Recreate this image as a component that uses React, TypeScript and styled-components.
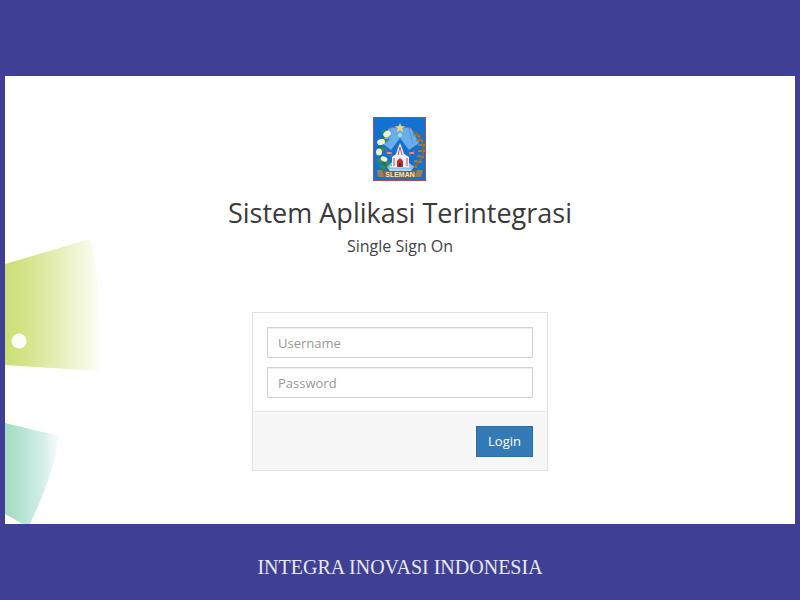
import React from "react";
import styled, { createGlobalStyle } from "styled-components";

const GlobalStyle = createGlobalStyle`
  *, *::before, *::after { box-sizing: border-box; }
  body {
    margin: 0;
    background: #3f4095;
    font-family: "Open Sans", "Noto Sans", sans-serif;
    color: #3a3a3a;
  }
`;

const Page = styled.div`
  min-height: 100vh;
  display: flex;
  flex-direction: column;
  padding: 76px 5px 0;
`;

const Screen = styled.main`
  display: grid;
  grid-template-columns: minmax(0, 1fr);
  background: #fff;
`;

const Backdrop = styled.svg`
  grid-area: 1 / 1;
  align-self: end;
  width: 100px;
  height: 289px;
`;

const Content = styled.div`
  grid-area: 1 / 1;
  z-index: 1;
  display: flex;
  flex-direction: column;
  align-items: center;
  padding: 41px 16px 53px;
`;

const Crest = styled.svg`
  width: 54px;
  height: 64px;
`;

const Title = styled.h1`
  margin: 16px 0 0;
  font-size: 27px;
  line-height: 32px;
  font-weight: 400;
  text-align: center;
`;

const Subtitle = styled.h2`
  margin: 7px 0 0;
  font-size: 16px;
  line-height: 20px;
  font-weight: 400;
  text-align: center;
  color: #444;
`;

const Card = styled.form`
  width: 100%;
  max-width: 296px;
  margin-top: 56px;
  background: #fff;
  border: 1px solid #e2e2e2;
`;

const Fields = styled.div`
  display: flex;
  flex-direction: column;
  gap: 9px;
  padding: 14px 14px 13px;
`;

const Field = styled.input`
  width: 100%;
  height: 31px;
  padding: 0 10px;
  border: 1px solid #d2d2d2;
  border-radius: 0;
  background: #fff;
  box-shadow: inset 0 1px 1px rgba(0, 0, 0, 0.07);
  font: 400 13px "Open Sans", "Noto Sans", sans-serif;
  color: #555;
  &::placeholder { color: #999; opacity: 1; }
`;

const Actions = styled.div`
  display: flex;
  justify-content: flex-end;
  padding: 14px 14px 13px;
  background: #f7f7f7;
  border-top: 1px solid #e7e7e7;
`;

const LoginButton = styled.button`
  height: 31px;
  padding: 0 11px 2px;
  border: 1px solid #2e6da4;
  background: #337ab7;
  color: #fff;
  font: 400 13px "Open Sans", "Noto Sans", sans-serif;
  cursor: pointer;
`;

const Caption = styled.footer`
  padding: 30px 16px 20px;
  font-family: "Liberation Serif", serif;
  font-size: 20px;
  line-height: 26px;
  text-align: center;
  color: #e8e8f2;
`;

function SlemanCrest() {
  return (
    <Crest viewBox="0 0 54 64" role="img" aria-label="Sleman">
      <rect width="53" height="64" fill="#a84a62" />
      <rect x="1" y="1" width="51" height="62" fill="#1272d2" />
      <path d="M16 11 L38 11 L46 26 L36 33 L27 21 L18 33 L9 26Z" fill="#69aee8" />
      <path d="M18 12 L14 27 M36 12 L40 27" stroke="#4e99dc" strokeWidth="1" />
      <path d="M15 12 L21 10 L27 12 L33 10 L39 12" fill="none" stroke="#b16d72" strokeWidth="1" />
      <path d="M27 6 l1.4 3.2 3.8.1 -3 2.3 1 3.6 -3.2 -2.1 -3.2 2.1 1 -3.6 -3 -2.3 3.8 -.1z" fill="#f2d878" />
      <circle cx="27" cy="18" r="2" fill="#b9dff5" />
      <path d="M13 17 Q4 26 7 38 Q9 46 18 52" fill="none" stroke="#28743f" strokeWidth="2.5" />
      <path d="M11 22l6 0-5 4z M8 30l6 1-5 4z M3 42l8-1-4 7z M12 44l7 2-5 4z M13 49l8 2-5 3z M5 48l8 1-2 4z M8 14l5-2-2 5z" fill="#3c8b4a" />
      <g fill="#eef1d4">
        <ellipse cx="14" cy="17" rx="4" ry="3" transform="rotate(-35 14 17)" />
        <ellipse cx="8" cy="25" rx="4" ry="3" transform="rotate(-20 8 25)" />
        <ellipse cx="6" cy="35" rx="3" ry="3.5" />
        <ellipse cx="11" cy="42" rx="3.5" ry="2.5" transform="rotate(25 11 42)" />
      </g>
      <path d="M42 14 Q54 27 49 40 Q46 48 37 52" fill="none" stroke="#91662e" strokeWidth="2" />
      <path d="M40 17l7 3M43 23l7 1M45 28l7 0M45 34l7 0M44 39l7 1M41 44l8 1M37 49l7 1" stroke="#a07b44" strokeWidth="2" strokeDasharray="4 1" />
      <path d="M14 50 L20 44 H34 L41 50 L38 54 H17Z" fill="#83bff0" />
      <path d="M17 50h20M16 53h22" stroke="#d8eafa" strokeWidth="1" />
      <path d="M14 36h5M36 36h5" stroke="#d69c9d" strokeWidth="2" />
      <path d="M14 33v5M18 35v5M37 35v5M41 33v5" stroke="#d35761" strokeWidth="1" />
      <path d="M19 40 L23 37 L25 31 L27 26 L29 31 L31 37 L36 40 V50 H19Z" fill="#f2eef0" />
      <path d="M21 41v8M34 41v8M25 38l2-8 2 8" fill="none" stroke="#bd5362" strokeWidth="1" />
      <path d="M24 50v-6l3-3 3 3v6z" fill="#c12b35" />
      <path d="M26 50v-4h2v4z" fill="#4a323d" />
      <path d="M4 53 L9 53 Q27 56 44 53 L50 53 L48 60 L43 60 Q27 63 10 60 L5 60Z" fill="#80613a" />
      <path d="M4 53l5 0 2 7-6 0zM50 53l-6 0-2 7 6 0z" fill="#a0804e" />
      <text x="27" y="60" textAnchor="middle" fill="#f1e5c9" fontFamily="Liberation Sans, sans-serif" fontWeight="700" fontSize="7">SLEMAN</text>
    </Crest>
  );
}

function FanBackdrop() {
  return (
    <Backdrop viewBox="0 0 100 289" aria-hidden="true">
      <defs>
        <linearGradient id="lime" gradientUnits="userSpaceOnUse" x1="0" y1="0" x2="97" y2="0">
          <stop offset="0" stopColor="#cbdf74" />
          <stop offset="0.25" stopColor="#d6e58e" />
          <stop offset="0.6" stopColor="#e8f0bf" />
          <stop offset="0.85" stopColor="#f6f9e4" />
          <stop offset="1" stopColor="#fefefa" />
        </linearGradient>
        <linearGradient id="mint" gradientUnits="userSpaceOnUse" x1="0" y1="0" x2="54" y2="0">
          <stop offset="0" stopColor="#a5dcc0" />
          <stop offset="0.3" stopColor="#b5e2d1" />
          <stop offset="0.7" stopColor="#d3eeeb" />
          <stop offset="1" stopColor="#f8fdfe" />
        </linearGradient>
      </defs>
      <path d="M0 29 L85 4 Q98 55 95 136 L0 130Z" fill="url(#lime)" />
      <circle cx="14" cy="106" r="7.5" fill="#fcfdf4" />
      <path d="M0 188 L54 201 Q50 236 25 289 H18 L0 279Z" fill="url(#mint)" />
    </Backdrop>
  );
}

export default function App() {
  return (
    <>
      <GlobalStyle />
      <Page>
        <Screen>
          <FanBackdrop />
          <Content>
            <SlemanCrest />
            <Title>Sistem Aplikasi Terintegrasi</Title>
            <Subtitle>Single Sign On</Subtitle>
            <Card onSubmit={(event: React.FormEvent) => event.preventDefault()}>
              <Fields>
                <Field type="text" name="username" placeholder="Username" aria-label="Username" />
                <Field type="password" name="password" placeholder="Password" aria-label="Password" />
              </Fields>
              <Actions>
                <LoginButton type="submit">Login</LoginButton>
              </Actions>
            </Card>
          </Content>
        </Screen>
        <Caption>INTEGRA INOVASI INDONESIA</Caption>
      </Page>
    </>
  );
}
